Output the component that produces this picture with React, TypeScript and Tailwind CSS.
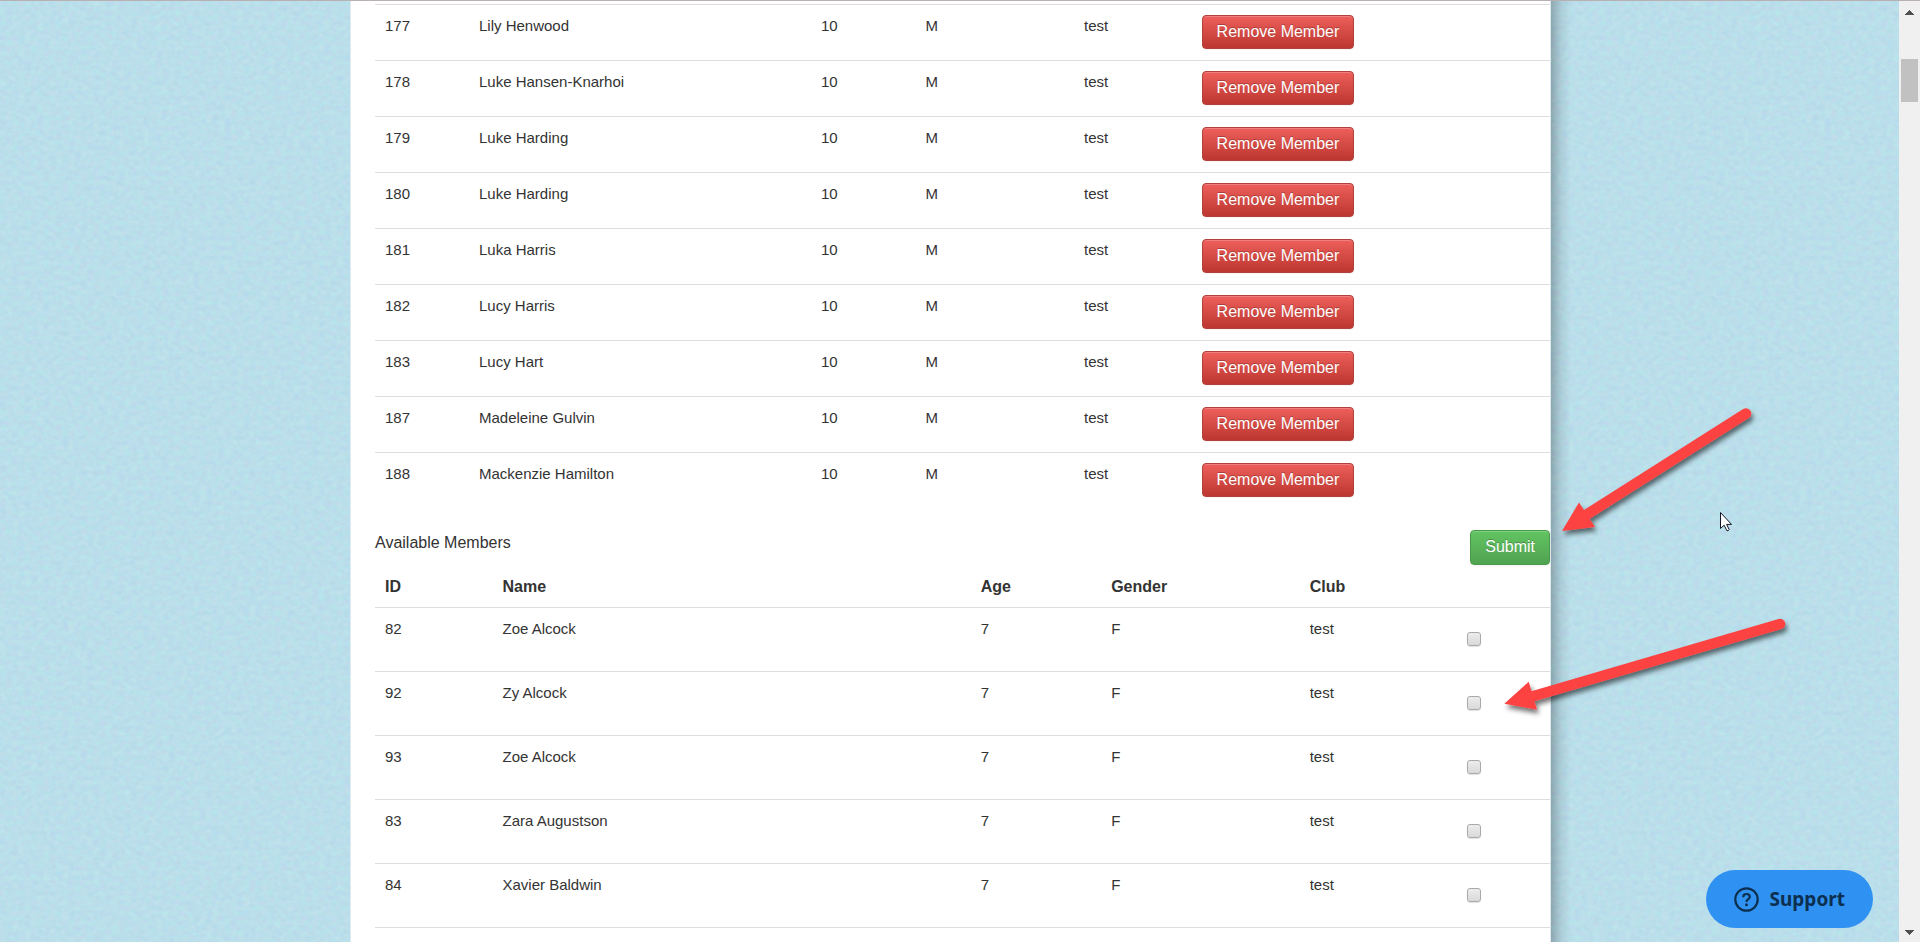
import React from "react";

type Member = { id: number; name: string; age: number; gender: string; club: string };

const currentMembers: Member[] = [
  { id: 177, name: "Lily Henwood", age: 10, gender: "M", club: "test" },
  { id: 178, name: "Luke Hansen-Knarhoi", age: 10, gender: "M", club: "test" },
  { id: 179, name: "Luke Harding", age: 10, gender: "M", club: "test" },
  { id: 180, name: "Luke Harding", age: 10, gender: "M", club: "test" },
  { id: 181, name: "Luka Harris", age: 10, gender: "M", club: "test" },
  { id: 182, name: "Lucy Harris", age: 10, gender: "M", club: "test" },
  { id: 183, name: "Lucy Hart", age: 10, gender: "M", club: "test" },
  { id: 187, name: "Madeleine Gulvin", age: 10, gender: "M", club: "test" },
  { id: 188, name: "Mackenzie Hamilton", age: 10, gender: "M", club: "test" },
];

const availableMembers: Member[] = [
  { id: 82, name: "Zoe Alcock", age: 7, gender: "F", club: "test" },
  { id: 92, name: "Zy Alcock", age: 7, gender: "F", club: "test" },
  { id: 93, name: "Zoe Alcock", age: 7, gender: "F", club: "test" },
  { id: 83, name: "Zara Augustson", age: 7, gender: "F", club: "test" },
  { id: 84, name: "Xavier Baldwin", age: 7, gender: "F", club: "test" },
];

function PaperTexture() {
  return (
    <svg className="absolute inset-0 h-full w-full" aria-hidden="true">
      <filter id="grain" x="0" y="0" width="100%" height="100%" colorInterpolationFilters="sRGB">
        <feTurbulence type="fractalNoise" baseFrequency="0.16 0.2" numOctaves="3" seed="4" />
        <feColorMatrix
          type="matrix"
          values="0.08 0 0 0 0.69  0 0.08 0 0 0.832  0 0 0.03 0 0.905  0 0 0 0 1"
        />
      </filter>
      <rect width="100%" height="100%" filter="url(#grain)" />
    </svg>
  );
}

function CurrentMembers() {
  return (
    <table className="w-full table-fixed border-collapse text-left">
      <colgroup>
        <col className="w-[8%]" />
        <col className="w-[29.1%]" />
        <col className="w-[8.9%]" />
        <col className="w-[13.5%]" />
        <col className="w-[10%]" />
        <col />
      </colgroup>
      <tbody className="text-[15px] leading-5">
        {currentMembers.map((m) => (
          <tr key={m.id} className="h-14 border-t border-[#dddddd] align-top">
            <td className="px-[10px] pt-[11px]">{m.id}</td>
            <td className="px-[10px] pt-[11px]">{m.name}</td>
            <td className="px-[10px] pt-[11px]">{m.age}</td>
            <td className="px-[10px] pt-[11px]">{m.gender}</td>
            <td className="px-[10px] pt-[11px]">{m.club}</td>
            <td className="px-[10px] pt-[10px]">
              <button
                type="button"
                className="block h-[34px] rounded border border-[#b0413c] bg-linear-to-b from-[#ee5f5b] to-[#bd362f] px-[14px] text-base leading-5 whitespace-nowrap text-white shadow-[inset_0_1px_0_rgba(255,255,255,0.2),0_1px_2px_rgba(0,0,0,0.05)] text-shadow-[0_-1px_0_rgba(0,0,0,0.25)]"
              >
                Remove Member
              </button>
            </td>
          </tr>
        ))}
      </tbody>
    </table>
  );
}

function AvailableMembers() {
  return (
    <form onSubmit={(e) => e.preventDefault()}>
      <div className="flex items-start justify-between pt-[21px]">
        <h2 className="pt-[3px] text-base leading-5">Available Members</h2>
        <button
          type="submit"
          className="h-[35px] rounded border border-[#4a9a4a] bg-linear-to-b from-[#62c462] to-[#51a351] px-[14px] text-base leading-5 text-white shadow-[inset_0_1px_0_rgba(255,255,255,0.2),0_1px_2px_rgba(0,0,0,0.05)] text-shadow-[0_-1px_0_rgba(0,0,0,0.25)]"
        >
          Submit
        </button>
      </div>
      <table className="w-full table-fixed border-collapse text-left">
        <colgroup>
          <col className="w-[10%]" />
          <col className="w-[40.7%]" />
          <col className="w-[11.1%]" />
          <col className="w-[16.9%]" />
          <col />
          <col className="w-[7.9%]" />
        </colgroup>
        <thead className="text-base leading-5">
          <tr className="h-[43px] align-top">
            <th className="px-[10px] pt-3">ID</th>
            <th className="px-[10px] pt-3">Name</th>
            <th className="px-[10px] pt-3">Age</th>
            <th className="px-[10px] pt-3">Gender</th>
            <th className="px-[10px] pt-3">Club</th>
            <th aria-label="Select" />
          </tr>
        </thead>
        <tbody className="text-[15px] leading-5">
          {availableMembers.map((m) => (
            <tr key={m.id} className="h-16 border-y border-[#dddddd] align-top">
              <td className="px-[10px] pt-[11px]">{m.id}</td>
              <td className="px-[10px] pt-[11px]">{m.name}</td>
              <td className="px-[10px] pt-[11px]">{m.age}</td>
              <td className="px-[10px] pt-[11px]">{m.gender}</td>
              <td className="px-[10px] pt-[11px]">{m.club}</td>
              <td className="pl-[10px] pt-6">
                <input
                  type="checkbox"
                  aria-label={`Select ${m.name}`}
                  className="block size-[14px] appearance-none rounded-[3px] border border-[#a9a9a9] bg-linear-to-b from-[#ececec] to-[#d9d9d9] shadow-[0_1px_1px_rgba(0,0,0,0.12)] checked:bg-[#62c462]"
                />
              </td>
            </tr>
          ))}
        </tbody>
      </table>
    </form>
  );
}

function Annotations() {
  return (
    <svg
      className="pointer-events-none absolute top-[399px] -right-[251px] h-[320px] w-[300px]"
      viewBox="1501 400 300 320"
      aria-hidden="true"
    >
      <defs>
        <filter id="drop" x="-10%" y="-10%" width="120%" height="130%">
          <feDropShadow dx="2" dy="4" stdDeviation="2.5" floodColor="#000" floodOpacity="0.55" />
        </filter>
      </defs>
      <g fill="#fd4343" stroke="#fd4343" filter="url(#drop)">
        <path d="M1746 413.5 1586 515" strokeWidth="10.5" strokeLinecap="round" />
        <path d="M1562 531 1579 502.5 1595 527Z" stroke="none" />
        <path d="M1780 624 1532 696.5" strokeWidth="10.5" strokeLinecap="round" />
        <path d="M1504.3 703.7 1528.7 681.7 1537 709.7Z" stroke="none" />
      </g>
      <path
        d="M1720.5 512.5v16l3.600-3.300 2.900 5.600q1.400 0 2.200-1.200l-2.600-5.200h4.900z"
        fill="#fff"
        stroke="#15152a"
        strokeWidth="1"
        strokeLinejoin="round"
      />
    </svg>
  );
}

function ScrollTrack() {
  return (
    <div className="flex w-[21px] shrink-0 flex-col items-center justify-between bg-[#f0f0f0] pt-[9px] pb-[7px]" aria-hidden="true">
      <div className="flex flex-col items-center gap-11">
        <svg className="h-[5px] w-[9px]" viewBox="0 0 9 5" shapeRendering="crispEdges">
          <path d="M4.5 0 9 5H0z" fill="#505050" />
        </svg>
        <div className="h-[43px] w-[17px] bg-[#c1c1c1]" />
      </div>
      <svg className="h-[5px] w-[9px]" viewBox="0 0 9 5" shapeRendering="crispEdges">
        <path d="M0 0h9L4.5 5z" fill="#505050" />
      </svg>
    </div>
  );
}

export default function App() {
  return (
    <div className="flex h-screen flex-col overflow-hidden border-t border-[#b9b0b3] font-['Liberation_Sans',Arial,sans-serif] text-[#333333]">
      <div className="flex min-h-0 flex-1">
        <div className="relative flex min-w-0 flex-1 justify-center overflow-hidden bg-[#b9deea] pl-[2px]">
          <PaperTexture />
          <main className="relative w-[1201px] border-x border-[#dfeaf0] bg-white pt-[3px] pl-6">
            <div className="absolute inset-y-0 left-full ml-px w-[20px] bg-linear-to-r from-black/25 via-black/8 to-transparent" />
            <CurrentMembers />
            <AvailableMembers />
            <Annotations />
          </main>
          <button
            type="button"
            className="absolute right-[26px] bottom-[14px] flex h-[58px] items-center gap-[11px] rounded-full bg-[#2f92f2] px-7 font-['Noto_Sans',sans-serif] text-[19px] font-bold text-[#0d2f4f]"
          >
            <svg className="size-[25px]" viewBox="0 0 25 25" fill="none" stroke="currentColor" strokeWidth="2.2" aria-hidden="true">
              <circle cx="12.5" cy="12.5" r="11.2" />
              <path d="M9.200 10.200c0-2 1.400-3.200 3.300-3.200s3.300 1.200 3.300 3c0 2.200-3.300 2.300-3.300 5" />
              <circle cx="12.500" cy="17.700" r="1.500" fill="currentColor" stroke="none" />
            </svg>
            Support
          </button>
        </div>
        <ScrollTrack />
      </div>
    </div>
  );
}
